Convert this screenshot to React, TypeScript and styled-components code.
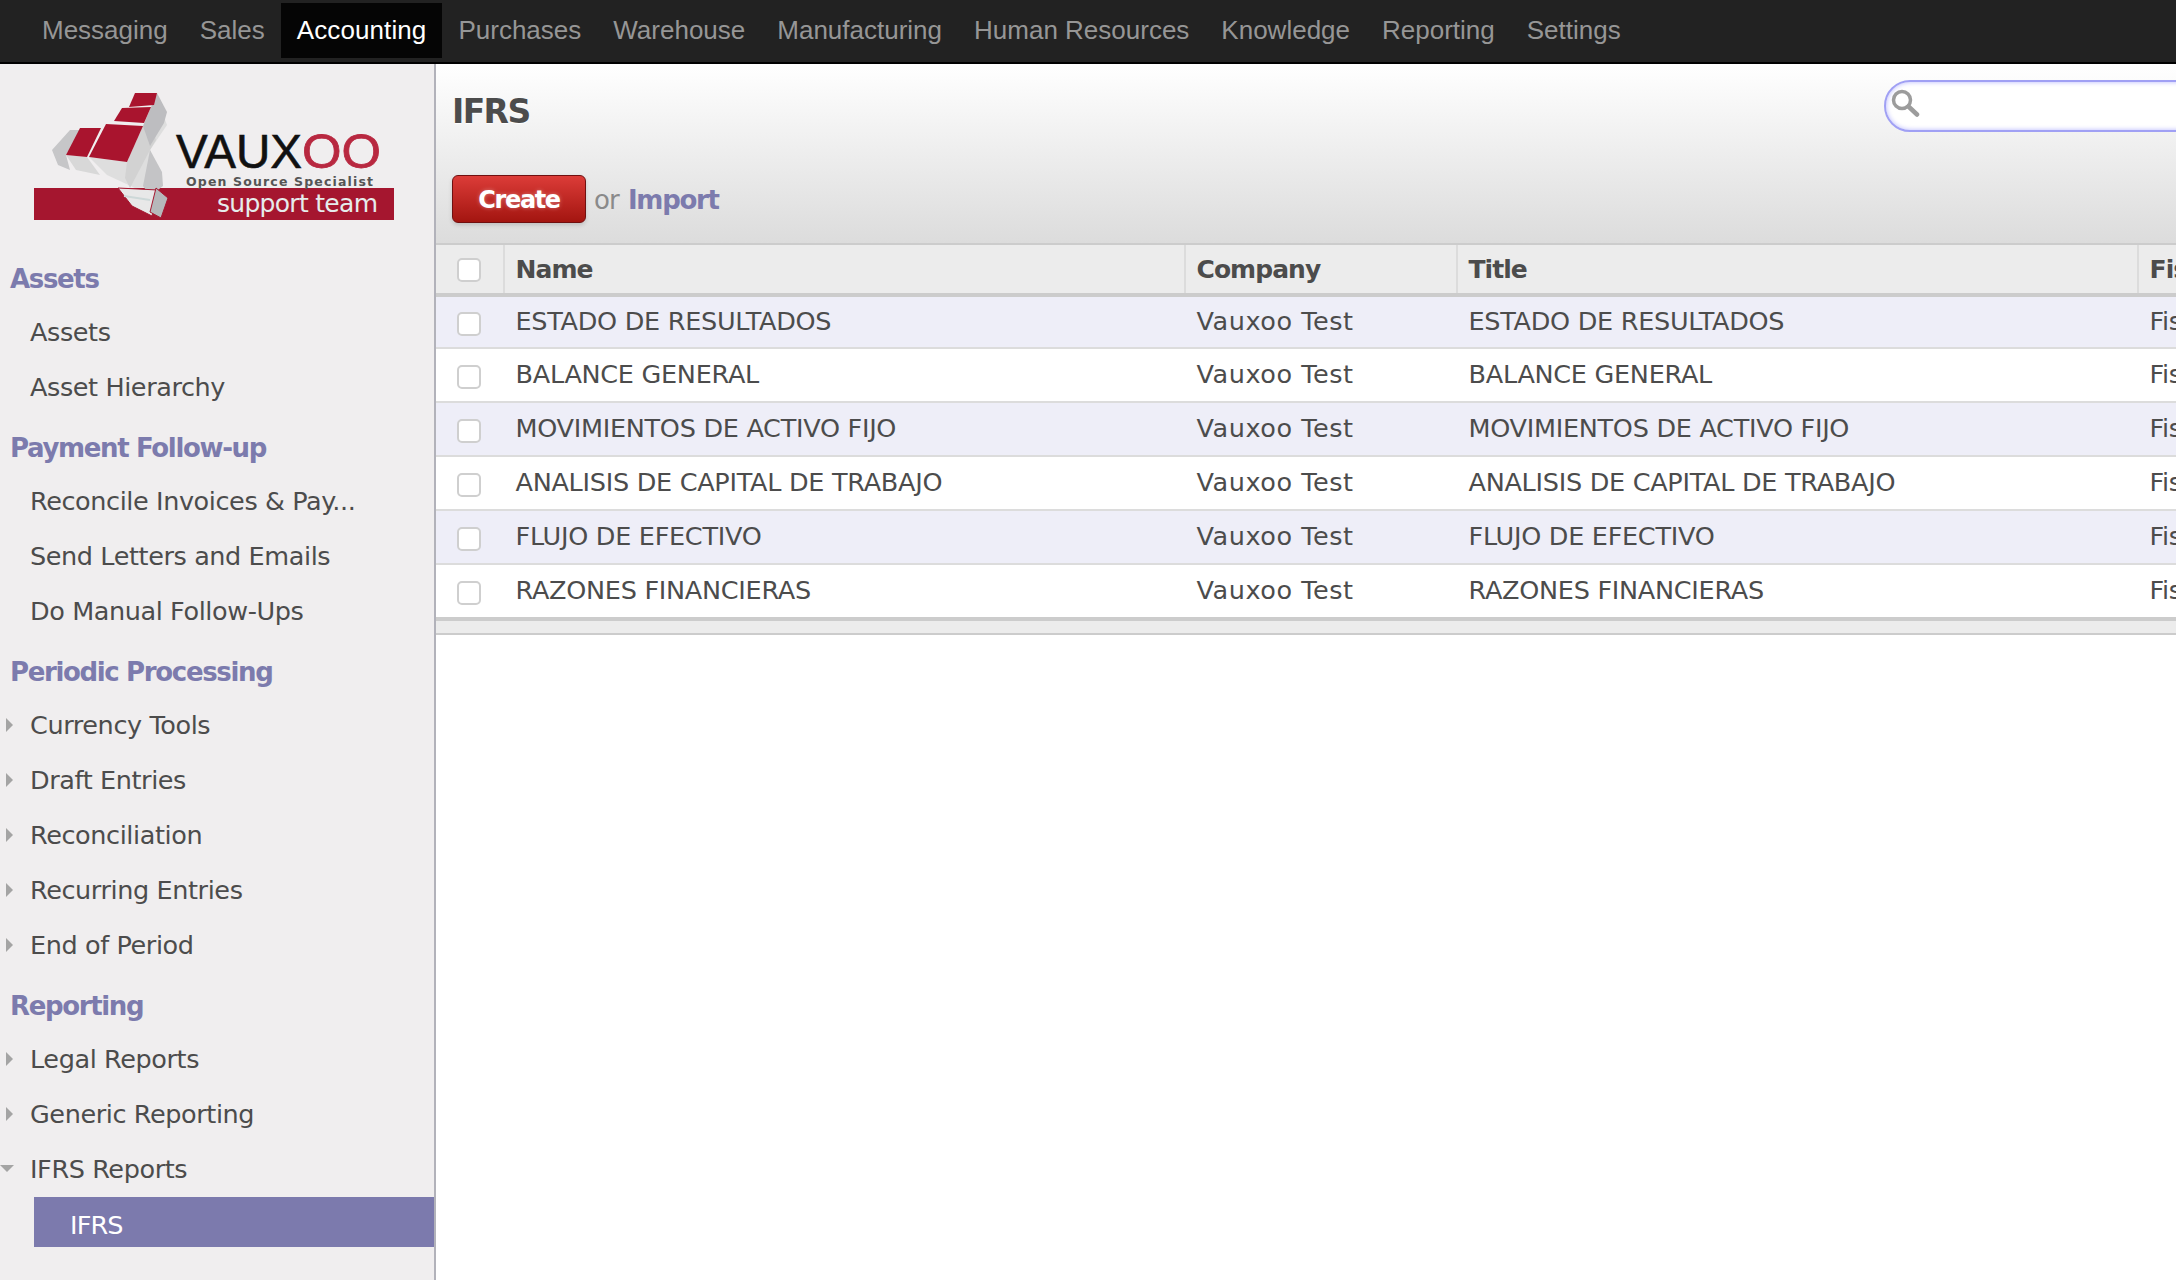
import React from "react";
import styled, { createGlobalStyle } from "styled-components";

const Global = createGlobalStyle`
  html, body { margin: 0; padding: 0; background: #fff; }
  body { width: 2176px; height: 1280px; overflow: hidden; font-family: "DejaVu Sans", "Liberation Sans", sans-serif; }
  * { box-sizing: border-box; }
`;

const Page = styled.div`
  width: 2176px; height: 1280px; overflow: hidden;
  display: flex; flex-direction: column;
`;
const TopBar = styled.nav`
  height: 64px; flex: none; background: #222; border-bottom: 2px solid #000;
  display: flex; align-items: flex-start; padding: 3px 0 0 26px;
  font-family: "Liberation Sans", Arial, sans-serif; font-size: 26px;
`;
const TopItem = styled.a<{ $active?: boolean }>`
  height: 55px; line-height: 55px; padding: 0 16px;
  letter-spacing: ${p => (p.$active ? "0.1px" : "0")};
  color: ${p => (p.$active ? "#fff" : "#969696")};
  background: ${p => (p.$active ? "#050505" : "transparent")};
`;
const Body = styled.div`
  flex: 1; display: flex; min-height: 0;
`;
const Sidebar = styled.aside`
  width: 436px; flex: none; background: #f0eeef; border-right: 2px solid #b2b2ba;
  padding-top: 26px;
`;
const LogoSvg = styled.svg`
  display: block; margin: 0 0 32px 34px;
`;
const Section = styled.section`
  margin-bottom: 9px;
`;
const Heading = styled.h2`
  margin: 0; height: 50px; line-height: 51px; padding-left: 10px;
  font-size: 26px; font-weight: 700; letter-spacing: -1.35px; color: #7c7bad;
`;
const Item = styled.div`
  position: relative; height: 55px; line-height: 56px; padding-left: 30px;
  font-size: 25.5px; letter-spacing: -0.4px; color: #4c4c4c; white-space: nowrap;
`;
const ArrowRight = styled.span`
  position: absolute; left: 6px; top: 21px; width: 0; height: 0;
  border-left: 7px solid #a4a4a4; border-top: 7px solid transparent; border-bottom: 7px solid transparent;
`;
const ArrowDown = styled.span`
  position: absolute; left: 0; top: 24px; width: 0; height: 0;
  border-top: 7px solid #a4a4a4; border-left: 7px solid transparent; border-right: 7px solid transparent;
`;
const ActiveItem = styled.div`
  margin: 1px 0 0 34px; height: 50px; line-height: 57px; padding-left: 36px;
  background: #7c7aad; color: #fff; font-size: 25.5px; letter-spacing: -0.85px;
`;
const Main = styled.main`
  flex: 1; min-width: 0; overflow: hidden; display: flex; flex-direction: column;
`;
const Header = styled.header`
  height: 179px; flex: none; background: linear-gradient(#fff, #dcdcdc);
  padding: 0 0 0 16px; display: flex; flex-direction: column;
`;
const HeaderTop = styled.div`
  display: flex; justify-content: space-between; align-items: flex-start; height: 111px;
`;
const Title = styled.h1`
  margin: 27px 0 0; font-size: 33px; line-height: 42px; font-weight: 700; letter-spacing: -1.6px;
  color: #4c4c4c; text-shadow: 0 1px 1px #fff;
`;
const Search = styled.div`
  margin: 16px -60px 0 0; width: 352px; height: 52px; flex: none;
  background: #fff; border: 2px solid #a0a0f4; border-radius: 26px;
  box-shadow: inset 0 0 5px #b8b8ff; padding: 7px 0 0 4px;
`;
const Actions = styled.div`
  display: flex; align-items: center; height: 48px;
`;
const CreateButton = styled.button`
  width: 134px; height: 48px; border: 1px solid #701010; border-radius: 6px; padding: 2px 0 0;
  background: linear-gradient(#dc3c38, #a31510); color: #fff;
  font: 700 24px "DejaVu Sans", sans-serif; letter-spacing: -1.4px;
  text-shadow: 0 0 4px rgba(255,255,255,.35);
  box-shadow: 0 2px 4px rgba(0,0,0,.15);
`;
const Or = styled.span`
  margin: 2px 0 0 8px; font-size: 26px; letter-spacing: -0.8px; color: #8a8a8a;
`;
const ImportLink = styled.a`
  margin: 2px 0 0 9px; font-size: 26px; font-weight: 700; letter-spacing: -1.3px; color: #7c7bad;
`;
const Columns = "67px 681px 272px 681px 240px";
const HeadRow = styled.div`
  display: grid; grid-template-columns: ${Columns}; flex: none;
  height: 54px; background: #ececec; border-top: 2px solid #ccc; border-bottom: 4px solid #ccc;
`;
const HeadCell = styled.div`
  display: flex; align-items: center; padding-left: 10.5px; border-left: 2px solid #dcdcdc;
  font-size: 25px; font-weight: 700; letter-spacing: -0.95px; color: #4c4c4c; white-space: nowrap;
  &:first-child { border-left: 0; padding: 1px 0 0 21px; }
`;
const Rows = styled.div`
  display: grid; grid-template-rows: 52px 54px 54px 54px 54px 52px; flex: none;
`;
const Row = styled.div<{ $odd: boolean }>`
  display: grid; grid-template-columns: ${Columns};
  background: ${p => (p.$odd ? "#eeeef8" : "#fff")};
  border-bottom: 2px solid #dcdcdc;
  &:last-child { border-bottom: 0; }
`;
const Cell = styled.div`
  padding: 0 0 3px 10.5px; display: flex; align-items: center;
  font-size: 25.5px; letter-spacing: -0.28px; color: #4c4c4c; white-space: nowrap;
  border-left: 2px solid transparent;
  &:first-child { border-left: 0; padding: 4px 0 0 21px; }
`;
const CompanyCell = styled(Cell)`
  letter-spacing: 0.55px;
`;
const Check = styled.span`
  display: block; width: 24px; height: 24px; flex: none; background: #fff;
  border: 2px solid #cfcfcf; border-radius: 5px;
`;
const Foot = styled.div`
  flex: none; height: 18px; background: #ececec; border-top: 4px solid #ccc; border-bottom: 2px solid #ccc;
`;

const nav = ["Messaging","Sales","Accounting","Purchases","Warehouse","Manufacturing","Human Resources","Knowledge","Reporting","Settings"];
const menu: { title: string; items: { label: string; arrow?: "right" | "down" }[] }[] = [
  { title: "Assets", items: [{ label: "Assets" }, { label: "Asset Hierarchy" }] },
  { title: "Payment Follow-up", items: [{ label: "Reconcile Invoices & Pay..." }, { label: "Send Letters and Emails" }, { label: "Do Manual Follow-Ups" }] },
  { title: "Periodic Processing", items: ["Currency Tools","Draft Entries","Reconciliation","Recurring Entries","End of Period"].map(label => ({ label, arrow: "right" as const })) },
];
const reporting = [
  { label: "Legal Reports", arrow: "right" },
  { label: "Generic Reporting", arrow: "right" },
  { label: "IFRS Reports", arrow: "down" },
];
const rows = ["ESTADO DE RESULTADOS","BALANCE GENERAL","MOVIMIENTOS DE ACTIVO FIJO","ANALISIS DE CAPITAL DE TRABAJO","FLUJO DE EFECTIVO","RAZONES FINANCIERAS"];

const Logo = () => (
  <LogoSvg width={360} height={132} viewBox="34 90 360 132">
    <rect x="34" y="188" width="360" height="32" fill="#a5162f" />
    <polygon points="70,130 82,130 66,155 70,170 58,165 52,150" fill="#c6c6c8" />
    <polygon points="66,155 87,157 100,175 76,170" fill="#d8d8d8" />
    <polygon points="89,157 127,162 162,112 167,125 150,150 160,172 158,186 135,188 107,175" fill="#dedede" />
    <polygon points="127,162 143,126 152,128 156,140 150,150 130,188 125,178" fill="#d2d2d2" />
    <polygon points="157,93 167,112 164,123 150,146 143,126 151,107" fill="#bdbdc0" />
    <polygon points="150,150 162,172 163,186 150,196 143,186" fill="#c4c4c6" />
    <polygon points="118,188 158,190 152,216 132,206" fill="#e8e8e8" stroke="#a5162f" strokeWidth="1" />
    <line x1="124" y1="196" x2="150" y2="200" stroke="#cdd8d8" strokeWidth="2" />
    <polygon points="156,188 168,198 161,218 150,212" fill="#b6b8ba" stroke="#a5162f" strokeWidth="1" />
    <polygon points="135,93 157,93 154,105 129,107" fill="#a9142e" />
    <polygon points="122,108 151,107 144,123 114,121" fill="#a9142e" />
    <polygon points="106,124 143,126 127,162 89,157" fill="#a9142e" />
    <polygon points="80,128 101,128 87,157 66,155" fill="#a9142e" />
    <text x="176" y="168" fontFamily="'Liberation Sans', sans-serif" fontSize="48" fill="#111" stroke="#111" strokeWidth="0.6" textLength="126" lengthAdjust="spacingAndGlyphs">VAUX</text>
    <text x="302" y="168" fontFamily="'Liberation Sans', sans-serif" fontSize="48" fill="#b82840" stroke="#b82840" strokeWidth="0.8" textLength="79" lengthAdjust="spacingAndGlyphs">OO</text>
    <text x="186" y="186" fontFamily="'DejaVu Sans', sans-serif" fontSize="12.5" fontWeight="700" fill="#555" textLength="187">Open Source Specialist</text>
    <text x="217" y="212" fontFamily="'DejaVu Sans', sans-serif" fontSize="25" fill="#e6ecec" textLength="161">support team</text>
  </LogoSvg>
);

export default function App() {
  return (
    <Page>
      <Global />
      <TopBar>
        {nav.map(n => <TopItem key={n} $active={n === "Accounting"}>{n}</TopItem>)}
      </TopBar>
      <Body>
        <Sidebar>
          <Logo />
          {menu.map(s => (
            <Section key={s.title}>
              <Heading>{s.title}</Heading>
              {s.items.map(i => (
                <Item key={i.label}>{i.arrow && <ArrowRight />}{i.label}</Item>
              ))}
            </Section>
          ))}
          <Section>
            <Heading>Reporting</Heading>
            {reporting.map(i => (
              <Item key={i.label}>{i.arrow === "down" ? <ArrowDown /> : <ArrowRight />}{i.label}</Item>
            ))}
            <ActiveItem>IFRS</ActiveItem>
          </Section>
        </Sidebar>
        <Main>
          <Header>
            <HeaderTop>
              <Title>IFRS</Title>
              <Search>
                <svg width="30" height="30" viewBox="0 0 30 30" fill="none" stroke="#9c9c9c">
                  <circle cx="12" cy="11" r="8.5" strokeWidth="3.5" />
                  <line x1="18.5" y1="17.5" x2="27" y2="25.5" strokeWidth="4.5" strokeLinecap="round" />
                </svg>
              </Search>
            </HeaderTop>
            <Actions>
              <CreateButton>Create</CreateButton>
              <Or>or</Or>
              <ImportLink>Import</ImportLink>
            </Actions>
          </Header>
          <HeadRow>
            <HeadCell><Check /></HeadCell>
            <HeadCell>Name</HeadCell>
            <HeadCell>Company</HeadCell>
            <HeadCell>Title</HeadCell>
            <HeadCell>Fiscal Year</HeadCell>
          </HeadRow>
          <Rows>
            {rows.map((r, i) => (
              <Row key={r} $odd={i % 2 === 0}>
                <Cell><Check /></Cell>
                <Cell>{r}</Cell>
                <CompanyCell>Vauxoo Test</CompanyCell>
                <Cell>{r}</Cell>
                <Cell>Fiscal Year</Cell>
              </Row>
            ))}
          </Rows>
          <Foot />
        </Main>
      </Body>
    </Page>
  );
}
